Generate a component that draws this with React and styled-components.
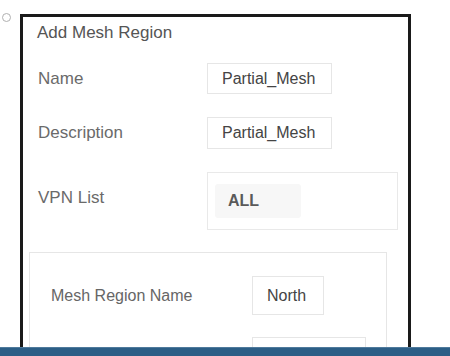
import React from "react";
import styled, { createGlobalStyle } from "styled-components";

const Global = createGlobalStyle`
  html, body { margin: 0; padding: 0; background: #fff; }
  body { font-family: "Liberation Sans", Arial, sans-serif; }
`;

const Page = styled.div`
  width: 450px;
  height: 356px;
  display: flex;
  flex-direction: column;
  overflow: hidden;
  background: #fff;
`;

const Stage = styled.div`
  flex: 1;
  min-height: 0;
  overflow: hidden;
  display: flex;
  align-items: flex-start;
  gap: 9px;
  padding: 14px 0 0 2px;
`;

const Radio = styled.div`
  width: 9px;
  height: 9px;
  margin-top: -1px;
  border: 1px solid #b0b0b0;
  border-radius: 50%;
  box-sizing: border-box;
`;

const Dialog = styled.div`
  width: 391px;
  height: 400px;
  box-sizing: border-box;
  border: 3px solid #1a1a1a;
  padding: 6px 0 0 0;
  display: flex;
  flex-direction: column;
`;

const Title = styled.div`
  font-size: 17px;
  line-height: 20px;
  color: #555;
  padding-left: 14px;
  margin-bottom: 20px;
`;

const Row = styled.div`
  display: grid;
  grid-template-columns: 169px auto;
  align-items: center;
  padding-left: 15px;
  margin-bottom: ${p => p.$mb || 23}px;
`;

const Label = styled.div`
  font-size: 17px;
  line-height: 20px;
  color: #6a6a6a;
  margin-top: ${p => p.$mt || 0}px;
`;

const Input = styled.div`
  box-sizing: border-box;
  width: ${p => p.$w || 125}px;
  height: ${p => p.$h || 31}px;
  border: 1.5px solid #e6e6e6;
  display: flex;
  align-items: center;
  padding-left: ${p => p.$pl || 14}px;
  font-size: 16px;
  color: #444;
  background: #fff;
`;

const VpnBox = styled.div`
  box-sizing: border-box;
  width: 191px;
  height: 58px;
  border: 1.5px solid #e9e9e9;
  display: flex;
  align-items: center;
  padding-left: 7px;
`;

const Tag = styled.div`
  width: 86px;
  height: 34px;
  background: #f7f7f7;
  border-radius: 3px;
  display: flex;
  align-items: center;
  padding-left: 13px;
  box-sizing: border-box;
  font-size: 16px;
  font-weight: 700;
  color: #5a5a5a;
`;

const Section = styled.div`
  margin-left: 6px;
  width: 358px;
  box-sizing: border-box;
  border: 1.5px solid #e6e6e6;
  padding: 23px 0 0 0;
  flex: 1;
`;

const SubRow = styled.div`
  display: grid;
  grid-template-columns: 201px auto;
  align-items: center;
  padding-left: 21px;
  margin-bottom: 22px;
`;

const SubLabel = styled.div`
  font-size: 16px;
  line-height: 20px;
  color: #666;
`;

const BottomBar = styled.div`
  height: 9px;
  box-sizing: border-box;
  flex-shrink: 0;
  background: #2c5e86;
  border-top: 1px solid #4f7a9c;
`;

export default function App() {
  return (
    <Page>
      <Global />
      <Stage>
        <Radio />
        <Dialog>
          <Title>Add Mesh Region</Title>
          <Row>
            <Label>Name</Label>
            <Input>Partial_Mesh</Input>
          </Row>
          <Row>
            <Label>Description</Label>
            <Input $h={32}>Partial_Mesh</Input>
          </Row>
          <Row $mb={22}>
            <Label $mt={-6}>VPN List</Label>
            <VpnBox>
              <Tag>ALL</Tag>
            </VpnBox>
          </Row>
          <Section>
            <SubRow>
              <SubLabel>Mesh Region Name</SubLabel>
              <Input $w={72} $h={39}>North</Input>
            </SubRow>
            <SubRow>
              <SubLabel></SubLabel>
              <Input $w={114} $h={39}></Input>
            </SubRow>
          </Section>
        </Dialog>
      </Stage>
      <BottomBar />
    </Page>
  );
}
